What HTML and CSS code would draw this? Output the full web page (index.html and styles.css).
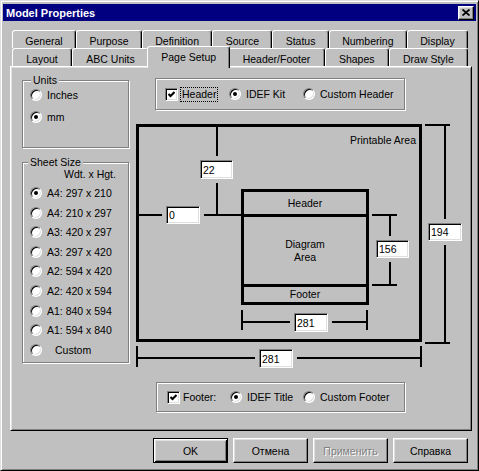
FILE: index.html
```html
<!DOCTYPE html>
<html lang="en">
<head>
  <meta charset="UTF-8" />
  <meta name="viewport" content="width=device-width, initial-scale=1.0" />
  <title>Model Properties</title>
  <link rel="stylesheet" href="styles.css">
</head>
<body>
  <div class="window">
    <div class="titlebar">
      <span class="title">Model Properties</span>
      <button class="close" aria-label="Close">
        <svg width="8" height="7" viewBox="0 0 8 7"><path d="M0.5 0.5L7.5 6.5M7.5 0.5L0.5 6.5" stroke="#000" stroke-width="1.7" fill="none"/></svg>
      </button>
    </div>

    <div class="content">
      <div class="tabs">
        <div class="tab-row">
          <div class="tab">General</div>
          <div class="tab">Purpose</div>
          <div class="tab">Definition</div>
          <div class="tab">Source</div>
          <div class="tab">Status</div>
          <div class="tab">Numbering</div>
          <div class="tab">Display</div>
        </div>
        <div class="tab-row">
          <div class="tab">Layout</div>
          <div class="tab">ABC Units</div>
          <div class="tab active">Page Setup</div>
          <div class="tab">Header/Footer</div>
          <div class="tab">Shapes</div>
          <div class="tab">Draw Style</div>
        </div>
      </div>

      <div class="panel">
        <div class="side">
          <div class="group units">
            <span class="group-label">Units</span>
            <label class="opt"><span class="radio"></span>Inches</label>
            <label class="opt"><span class="radio on"></span>mm</label>
          </div>

          <div class="group sheet">
            <span class="group-label">Sheet Size</span>
            <div class="caption">Wdt. x Hgt.</div>
            <label class="opt"><span class="radio on"></span>A4: 297 x 210</label>
            <label class="opt"><span class="radio"></span>A4: 210 x 297</label>
            <label class="opt"><span class="radio"></span>A3: 420 x 297</label>
            <label class="opt"><span class="radio"></span>A3: 297 x 420</label>
            <label class="opt"><span class="radio"></span>A2: 594 x 420</label>
            <label class="opt"><span class="radio"></span>A2: 420 x 594</label>
            <label class="opt"><span class="radio"></span>A1: 840 x 594</label>
            <label class="opt"><span class="radio"></span>A1: 594 x 840</label>
            <label class="opt"><span class="radio"></span><span class="indent">Custom</span></label>
          </div>
        </div>

        <div class="main">
          <div class="group hf head-opts">
            <label class="opt"><span class="check"><svg width="7" height="7" viewBox="0 0 7 7"><path d="M0.5 3L2.5 5L6.5 1" stroke="#000" stroke-width="2" fill="none"/></svg></span><span class="focus">Header</span></label>
            <label class="opt"><span class="radio on"></span>IDEF Kit</label>
            <label class="opt"><span class="radio"></span>Custom Header</label>
          </div>

          <div class="diagram">
            <div class="printable">Printable Area</div>
            <div class="page-box">
              <div class="pb-head">Header</div>
              <div class="pb-area">Diagram<br>Area</div>
              <div class="pb-foot">Footer</div>
            </div>
            <svg class="dims" width="336" height="254">
              <rect x="82" y="9" width="2" height="88"/>
              <rect x="5" y="96" width="102" height="2"/>
              <rect x="238" y="96" width="25" height="2"/>
              <rect x="255" y="98" width="2" height="68"/>
              <rect x="238" y="166" width="25" height="2"/>
              <rect x="291" y="6" width="25" height="2"/>
              <rect x="310" y="6" width="2" height="220"/>
              <rect x="291" y="224" width="25" height="2"/>
              <rect x="107" y="192" width="2" height="20"/>
              <rect x="232" y="192" width="2" height="20"/>
              <rect x="107" y="203" width="127" height="2"/>
              <rect x="2" y="228" width="2" height="21"/>
              <rect x="286" y="228" width="2" height="21"/>
              <rect x="2" y="239" width="286" height="2"/>
            </svg>
            <input class="field f-top" type="text" value="22">
            <input class="field f-left" type="text" value="0">
            <input class="field f-height" type="text" value="156">
            <input class="field f-outer-h" type="text" value="194">
            <input class="field f-width" type="text" value="281">
            <input class="field f-outer-w" type="text" value="281">
          </div>

          <div class="group hf foot-opts">
            <label class="opt"><span class="check"><svg width="7" height="7" viewBox="0 0 7 7"><path d="M0.5 3L2.5 5L6.5 1" stroke="#000" stroke-width="2" fill="none"/></svg></span>Footer:</label>
            <label class="opt"><span class="radio on"></span>IDEF Title</label>
            <label class="opt"><span class="radio"></span>Custom Footer</label>
          </div>
        </div>
      </div>

      <div class="buttons">
        <button class="btn default">OK</button>
        <button class="btn">Отмена</button>
        <button class="btn" disabled>Применить</button>
        <button class="btn">Справка</button>
      </div>
    </div>
  </div>
</body>
</html>
```

FILE: styles.css
```css
* {
  margin: 0;
  padding: 0;
  box-sizing: border-box;
}

body {
  width: 479px;
  height: 471px;
  overflow: hidden;
  background: #c0c0c0;
  font-family: "Liberation Sans", Arial, sans-serif;
  font-size: 10.5px;
  color: #000;
}

.window {
  width: 479px;
  height: 471px;
  border: 1px solid;
  border-color: #dfdfdf #000 #000 #dfdfdf;
  box-shadow: inset 1px 1px #fff, inset -1px -1px #808080;
  padding: 3px 2px 0 2px;
}

/* title bar */
.titlebar {
  height: 17px;
  background: #000080;
  color: #fff;
  display: flex;
  align-items: center;
  justify-content: space-between;
  padding: 0 2px 0 3px;
}

.title {
  font-weight: bold;
  font-size: 11px;
}

.close {
  width: 16px;
  height: 14px;
  background: #c0c0c0;
  border: 1px solid;
  border-color: #fff #000 #000 #fff;
  box-shadow: inset -1px -1px #808080, inset 1px 1px #dfdfdf;
  display: flex;
  align-items: center;
  justify-content: center;
}

.content {
  padding: 9px 4px 0 7px;
}

/* tabs */
.tabs {
  margin: 0 4px 0 2px;
}

.tab-row {
  display: flex;
  height: 18px;
}

.tab {
  flex: auto;
  height: 18px;
  padding: 3px 10px 0;
  line-height: 14px;
  text-align: center;
  white-space: nowrap;
  background: #c0c0c0;
  border: 1px solid;
  border-bottom: none;
  border-color: #fff #000 transparent #fff;
  box-shadow: inset -1px 0 #808080;
  border-radius: 3px 3px 0 0;
}

.tab.active {
  position: relative;
  z-index: 1;
  height: 22px;
  margin: -2px -2px -2px;
}

/* panel */
.panel {
  height: 365px;
  display: flex;
  border: 1px solid;
  border-color: #fff #000 #000 #fff;
  box-shadow: inset 1px 1px #dfdfdf, inset -1px -1px #808080;
  padding-left: 11px;
}

.group {
  position: relative;
  border: 1px solid #808080;
  box-shadow: inset 1px 1px #fff, 1px 1px #fff;
}

.group-label {
  position: absolute;
  top: -7px;
  left: 8px;
  padding: 0 2px;
  line-height: 13px;
  background: #c0c0c0;
}

.side {
  width: 107px;
}

.opt {
  display: flex;
  align-items: center;
  gap: 5px;
  height: 14px;
  white-space: nowrap;
}

.units {
  margin-top: 13px;
  height: 68px;
  padding: 7px 0 0 7px;
  display: flex;
  flex-direction: column;
  gap: 8px;
}

.sheet {
  margin-top: 14px;
  height: 201px;
  padding: 5px 0 0 7px;
}

.sheet .group-label {
  left: 5px;
}

.sheet .opt {
  height: 19.6px;
}

.caption {
  height: 15.2px;
  line-height: 13px;
  padding-left: 34px;
}

.indent {
  margin-left: 8px;
}

.radio {
  flex: none;
  width: 12px;
  height: 12px;
  border-radius: 50%;
  background: #fff;
  border: 1px solid;
  border-color: #808080 #fff #fff #808080;
  box-shadow: inset 1px 1px #000, inset -1px -1px #dfdfdf;
  display: flex;
  align-items: center;
  justify-content: center;
}

.radio.on::after {
  content: "";
  width: 4px;
  height: 4px;
  border-radius: 50%;
  background: #000;
}

.check {
  flex: none;
  width: 13px;
  height: 13px;
  background: #fff;
  border: 1px solid;
  border-color: #808080 #fff #fff #808080;
  box-shadow: inset 1px 1px #000, inset -1px -1px #dfdfdf;
  display: flex;
  align-items: center;
  justify-content: center;
}

.focus {
  outline: 1px dotted #000;
  padding: 0 1px;
  line-height: 13px;
  margin-left: -2px;
}

/* right side */
.main {
  margin-left: 5px;
  width: 336px;
  display: flex;
  flex-direction: column;
}

.hf {
  height: 32px;
  display: grid;
  align-items: center;
}

.head-opts {
  margin: 11px 0 0 21px;
  width: 250px;
  padding-left: 9px;
  grid-template-columns: 64px 74px auto;
}

.foot-opts {
  margin: 10px 0 0 22px;
  width: 249px;
  height: 30px;
  padding-left: 10px;
  grid-template-columns: 63px 73px auto;
}

.foot-opts .opt:first-child {
  gap: 3px;
}

.diagram {
  position: relative;
  margin-top: 8px;
  height: 254px;
}

.printable {
  position: absolute;
  left: 2px;
  top: 6px;
  width: 286px;
  height: 218px;
  border: 3px solid #000;
  text-align: right;
  padding: 7px 3px 0 0;
  line-height: 13px;
}

.page-box {
  position: absolute;
  left: 107px;
  top: 71px;
  width: 128px;
  height: 116px;
  border: 3px solid #000;
  display: flex;
  flex-direction: column;
  text-align: center;
}

.pb-head {
  height: 25px;
  border-bottom: 3px solid #000;
  line-height: 22px;
}

.pb-area {
  flex: 1;
  display: flex;
  align-items: center;
  justify-content: center;
  line-height: 13px;
}

.pb-foot {
  height: 18px;
  border-top: 3px solid #000;
  line-height: 15px;
}

.dims {
  position: absolute;
  left: 0;
  top: 0;
  fill: #000;
}

.field {
  position: absolute;
  font: inherit;
  color: #000;
  background: #fff;
  padding: 0 0 0 2px;
  border: 1px solid;
  border-color: #808080 #fff #fff #808080;
  box-shadow: inset 1px 1px #000, inset -1px -1px #dfdfdf;
  outline: 4px solid #c0c0c0;
}

.f-top { left: 66px; top: 42px; width: 33px; height: 19px; }
.f-left { left: 32px; top: 88px; width: 34px; height: 18px; }
.f-height { left: 242px; top: 122px; width: 33px; height: 18px; }
.f-outer-h { left: 294px; top: 105px; width: 34px; height: 18px; }
.f-width { left: 160px; top: 195px; width: 34px; height: 19px; }
.f-outer-w { left: 125px; top: 231px; width: 34px; height: 19px; }

/* dialog buttons */
.buttons {
  display: flex;
  justify-content: flex-end;
  gap: 5px;
  margin-top: 7px;
  padding-right: 4px;
}

.btn {
  width: 75px;
  height: 25px;
  font: inherit;
  color: #000;
  background: #c0c0c0;
  border: 1px solid;
  border-color: #fff #000 #000 #fff;
  box-shadow: inset -1px -1px #808080, inset 1px 1px #dfdfdf;
}

.btn.default {
  border-color: #000;
  box-shadow: inset 1px 1px #fff, inset -1px -1px #000, inset 2px 2px #dfdfdf, inset -2px -2px #808080;
}

.btn:disabled {
  color: #808080;
  text-shadow: 1px 1px #fff;
}
```
